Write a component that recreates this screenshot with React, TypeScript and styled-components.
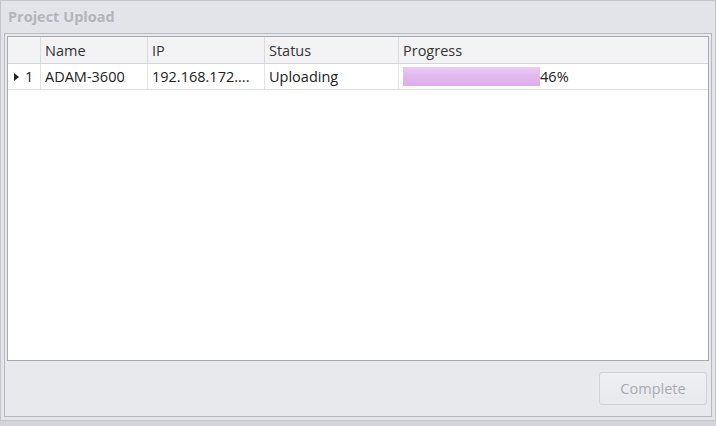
import React from "react";
import styled, { createGlobalStyle } from "styled-components";

const Global = createGlobalStyle`
  html, body { margin: 0; padding: 0; background: #d4d5db; }
  body { font-family: "Open Sans", "Liberation Sans", sans-serif; }
  * { box-sizing: border-box; }
`;

const Window = styled.div`
  width: 716px;
  height: 426px;
  background: #d4d5db;
  overflow: hidden;
`;

const Frame = styled.div`
  height: 421px;
  border: 1px solid #c4c5cb;
  background: #e3e4e9;
  display: flex;
  flex-direction: column;
`;

const Title = styled.div`
  height: 32px;
  padding-left: 7px;
  line-height: 32px;
  font-size: 14.5px;
  font-weight: 700;
  color: #b3b5bc;
  flex: none;
`;

const Inner = styled.div`
  flex: 1;
  margin: 0 3px 3px 3px;
  border: 1px solid #b8b9bf;
  background: #e8e9ed;
  padding: 2px 2px 0 2px;
  display: flex;
  flex-direction: column;
  min-height: 0;
`;

const Grid = styled.div`
  flex: 1;
  border: 1px solid #a9aab0;
  background: #ffffff;
  display: flex;
  flex-direction: column;
`;

const Row = styled.div<{ $header?: boolean }>`
  display: grid;
  grid-template-columns: 33px 107px 117px 134px 1fr;
  height: ${(p) => (p.$header ? "27px" : "26px")};
  background: ${(p) => (p.$header ? "#f3f3f5" : "#ffffff")};
  border-bottom: 1px solid ${(p) => (p.$header ? "#d6d7db" : "#e1e1e5")};
`;

const Cell = styled.div<{ $header?: boolean }>`
  border-right: 1px solid ${(p) => (p.$header ? "#dadbdf" : "#e3e3e7")};
  padding: 0 4px;
  display: flex;
  align-items: center;
  font-size: 14.5px;
  color: ${(p) => (p.$header ? "#333333" : "#222222")};
  white-space: nowrap;
  overflow: hidden;
  &:last-child { border-right: none; }
`;

const Indicator = styled(Cell)`
  padding: 0 0 0 6px;
  gap: 6px;
`;

const Arrow = styled.span`
  width: 0;
  height: 0;
  border-top: 4px solid transparent;
  border-bottom: 4px solid transparent;
  border-left: 5px solid #222;
`;

const ProgressCell = styled(Cell)`
  padding: 0 4px;
`;

const Bar = styled.div`
  height: 19px;
  background: linear-gradient(#eccbf5 0%, #e2b8ef 50%, #dcaeea 100%);
  flex: none;
`;

const Pct = styled.span`
  margin-left: 0;
`;

const Footer = styled.div`
  height: 55px;
  flex: none;
  display: flex;
  align-items: center;
  justify-content: flex-end;
  padding-right: 2px;
`;

const Button = styled.button`
  width: 108px;
  height: 33px;
  border: 1px solid #d2d3d8;
  border-radius: 3px;
  background: linear-gradient(#eff0f3, #e8e9ed);
  color: #a9abb3;
  font-family: "Open Sans", "Liberation Sans", sans-serif;
  font-size: 14.5px;
  padding: 0;
`;

const progress = 46;

export default function App() {
  return (
    <Window>
      <Global />
      <Frame>
        <Title>Project Upload</Title>
        <Inner>
          <Grid>
            <Row $header>
              <Cell $header />
              <Cell $header>Name</Cell>
              <Cell $header>IP</Cell>
              <Cell $header>Status</Cell>
              <Cell $header>Progress</Cell>
            </Row>
            <Row>
              <Indicator>
                <Arrow />
                1
              </Indicator>
              <Cell>ADAM-3600</Cell>
              <Cell>192.168.172....</Cell>
              <Cell>Uploading</Cell>
              <ProgressCell>
                <Bar style={{ width: `${(progress / 100) * 298}px` }} />
                <Pct>{progress}%</Pct>
              </ProgressCell>
            </Row>
          </Grid>
          <Footer>
            <Button disabled>Complete</Button>
          </Footer>
        </Inner>
      </Frame>
    </Window>
  );
}
